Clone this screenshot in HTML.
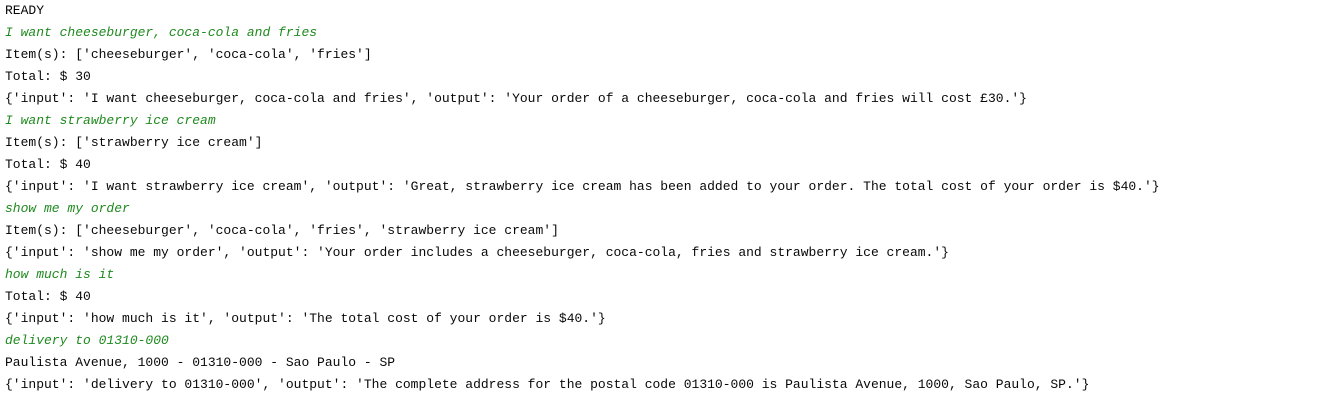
<!DOCTYPE html>
<html><head><meta charset="utf-8"><style>
html,body{margin:0;padding:0;background:#fff;width:1328px;height:415px;overflow:hidden}
.c{padding:0 0 0 5px;font-family:"Liberation Mono",monospace;font-size:13px;line-height:22px;color:#080808;white-space:pre}
.g{color:#1f8a1f;font-style:italic}
</style></head><body><div class="c">READY
<span class="g">I want cheeseburger, coca-cola and fries</span>
Item(s): ['cheeseburger', 'coca-cola', 'fries']
Total: $ 30
{'input': 'I want cheeseburger, coca-cola and fries', 'output': 'Your order of a cheeseburger, coca-cola and fries will cost £30.'}
<span class="g">I want strawberry ice cream</span>
Item(s): ['strawberry ice cream']
Total: $ 40
{'input': 'I want strawberry ice cream', 'output': 'Great, strawberry ice cream has been added to your order. The total cost of your order is $40.'}
<span class="g">show me my order</span>
Item(s): ['cheeseburger', 'coca-cola', 'fries', 'strawberry ice cream']
{'input': 'show me my order', 'output': 'Your order includes a cheeseburger, coca-cola, fries and strawberry ice cream.'}
<span class="g">how much is it</span>
Total: $ 40
{'input': 'how much is it', 'output': 'The total cost of your order is $40.'}
<span class="g">delivery to 01310-000</span>
Paulista Avenue, 1000 - 01310-000 - Sao Paulo - SP
{'input': 'delivery to 01310-000', 'output': 'The complete address for the postal code 01310-000 is Paulista Avenue, 1000, Sao Paulo, SP.'}</div></body></html>
